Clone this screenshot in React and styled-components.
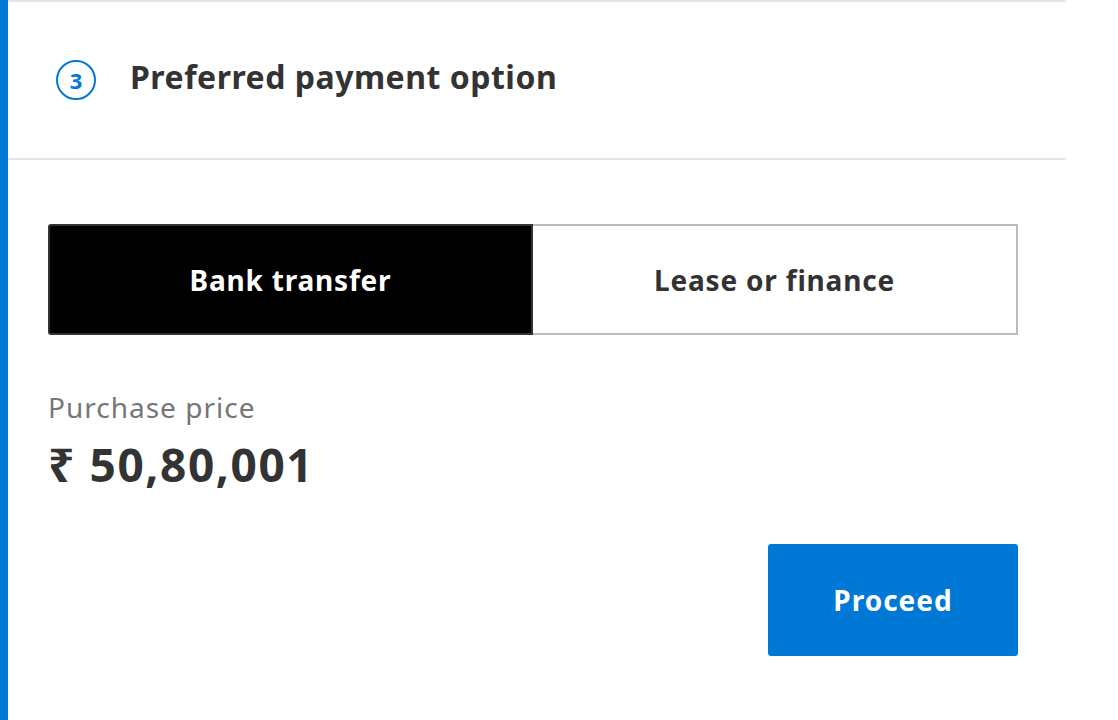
import React, { useState } from "react";
import styled, { createGlobalStyle } from "styled-components";

const Global = createGlobalStyle`
  html, body { margin: 0; padding: 0; background: #fff; }
  body { font-family: "Noto Sans", "Open Sans", sans-serif; color: #333; }
  * { box-sizing: border-box; }
`;

const Page = styled.div`
  display: flex;
  width: 1118px;
  height: 720px;
  overflow: hidden;
`;

const AccentBar = styled.div`
  width: 8px;
  flex: 0 0 8px;
  background: #0078d6;
`;

const Card = styled.section`
  width: 1058px;
  border-top: 2px solid #e6e6e6;
  display: flex;
  flex-direction: column;
`;

const Header = styled.header`
  height: 158px;
  border-bottom: 2px solid #e6e6e6;
  display: flex;
  align-items: center;
  padding-left: 48px;
  gap: 34px;
`;

const StepBadge = styled.div`
  width: 40px;
  height: 40px;
  border: 2px solid #0078d6;
  border-radius: 50%;
  color: #0078d6;
  display: flex;
  align-items: center;
  justify-content: center;
  font-size: 22px;
  font-weight: 700;
  line-height: 1;
  padding-bottom: 1px;
`;

const Title = styled.h2`
  margin: 0 0 8px;
  font-size: 32px;
  font-weight: 700;
  letter-spacing: 0.5px;
  color: #333;
`;

const Body = styled.div`
  padding: 64px 48px 0 40px;
  display: flex;
  flex-direction: column;
`;

const Toggle = styled.div`
  display: grid;
  grid-template-columns: 1fr 1fr;
  height: 111px;
`;

const ToggleButton = styled.button`
  font-family: inherit;
  font-size: 28px;
  font-weight: 700;
  letter-spacing: 0.8px;
  cursor: pointer;
  background: ${(p) => (p.$active ? "#000" : "#fff")};
  color: ${(p) => (p.$active ? "#fff" : "#333")};
  border: 2px solid ${(p) => (p.$active ? "#333" : "#bbb")};
  border-radius: ${(p) => (p.$active ? "3px 0 0 3px" : "0")};
  ${(p) => (p.$active ? "" : "border-left: none;")}
`;

const PriceLabel = styled.div`
  margin-top: 54px;
  font-size: 28px;
  color: #767676;
  letter-spacing: 1px;
  line-height: 36px;
`;

const PriceValue = styled.div`
  margin-top: 11px;
  font-size: 46px;
  font-weight: 700;
  color: #333;
  line-height: 56px;
  letter-spacing: 1.6px;
`;

const Actions = styled.div`
  display: flex;
  justify-content: flex-end;
  margin-top: 52px;
`;

const PrimaryButton = styled.button`
  width: 250px;
  height: 112px;
  background: #0078d6;
  color: #fff;
  border: none;
  border-radius: 3px;
  font-family: inherit;
  font-size: 28px;
  font-weight: 700;
  letter-spacing: 1px;
  cursor: pointer;
`;

export default function App() {
  const [mode, setMode] = useState("bank");
  return (
    <>
      <Global />
      <Page>
        <AccentBar />
        <Card>
          <Header>
            <StepBadge>3</StepBadge>
            <Title>Preferred payment option</Title>
          </Header>
          <Body>
            <Toggle>
              <ToggleButton $active={mode === "bank"} onClick={() => setMode("bank")}>
                Bank transfer
              </ToggleButton>
              <ToggleButton $active={mode === "lease"} onClick={() => setMode("lease")}>
                Lease or finance
              </ToggleButton>
            </Toggle>
            <PriceLabel>Purchase price</PriceLabel>
            <PriceValue>₹ 50,80,001</PriceValue>
            <Actions>
              <PrimaryButton>Proceed</PrimaryButton>
            </Actions>
          </Body>
        </Card>
      </Page>
    </>
  );
}
